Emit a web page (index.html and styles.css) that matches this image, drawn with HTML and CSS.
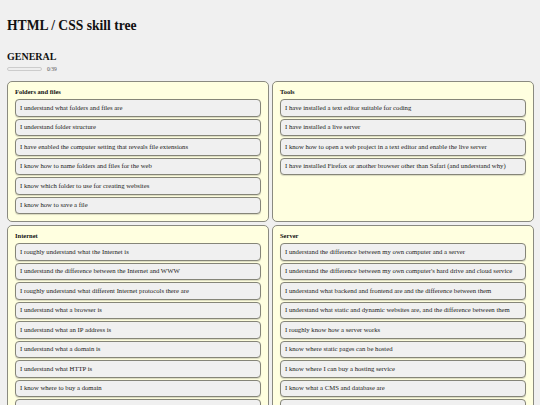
FILE: index.html
```html
<!DOCTYPE html>
<html lang="en">
<head>
    <meta charset="UTF-8">
    <meta name="viewport" content="width=device-width, initial-scale=1.0">
    <title>HTML / CSS skill tree</title>
    <link rel="stylesheet" href="styles.css">
</head>
<body>
    <h1>HTML / CSS skill tree</h1>

    <!-- General category -->
    <section class="category">
        <h2>GENERAL</h2>
        <div class="progress">
            <div class="bar"><span style="width:0%"></span></div>
            <span class="count">0/39</span>
        </div>

        <div class="groups">
            <div class="group">
                <h3>Folders and files</h3>
                <ul class="skills">
                    <li>I understand what folders and files are</li>
                    <li>I understand folder structure</li>
                    <li>I have enabled the computer setting that reveals file extensions</li>
                    <li>I know how to name folders and files for the web</li>
                    <li>I know which folder to use for creating websites</li>
                    <li>I know how to save a file</li>
                </ul>
            </div>
            <div class="group">
                <h3>Tools</h3>
                <ul class="skills">
                    <li>I have installed a text editor suitable for coding</li>
                    <li>I have installed a live server</li>
                    <li>I know how to open a web project in a text editor and enable the live server</li>
                    <li>I have installed Firefox or another browser other than Safari (and understand why)</li>
                </ul>
            </div>
            <div class="group">
                <h3>Internet</h3>
                <ul class="skills">
                    <li>I roughly understand what the Internet is</li>
                    <li>I understand the difference between the Internet and WWW</li>
                    <li>I roughly understand what different Internet protocols there are</li>
                    <li>I understand what a browser is</li>
                    <li>I understand what an IP address is</li>
                    <li>I understand what a domain is</li>
                    <li>I understand what HTTP is</li>
                    <li>I know where to buy a domain</li>
                    <li>I understand what DNS is</li>
                </ul>
            </div>
            <div class="group">
                <h3>Server</h3>
                <ul class="skills">
                    <li>I understand the difference between my own computer and a server</li>
                    <li>I understand the difference between my own computer's hard drive and cloud service</li>
                    <li>I understand what backend and frontend are and the difference between them</li>
                    <li>I understand what static and dynamic websites are, and the difference between them</li>
                    <li>I roughly know how a server works</li>
                    <li>I know where static pages can be hosted</li>
                    <li>I know where I can buy a hosting service</li>
                    <li>I know what a CMS and database are</li>
                    <li>I know how to upload files to a server</li>
                </ul>
            </div>
        </div>
    </section>
</body>
</html>
```

FILE: styles.css
```css
body {
    font-family: "Liberation Serif", "Times New Roman", serif;
    background-color: #f0f0f0;
    color: #222;
    margin: 0;
    padding: 0 6px 0 7px;
}
h1 {
    font-size: 13.6px;
    margin: 17px 0 0;
    line-height: 17px;
    color: #111;
}
.category h2 {
    font-size: 10px;
    margin: 17px 0 0;
    line-height: 12px;
    color: #111;
}
.progress {
    display: flex;
    align-items: center;
    gap: 5px;
    margin-top: 3px;
}
.progress .bar {
    width: 33px;
    height: 2px;
    border: 1px solid #ccc;
    border-radius: 3px;
    background-color: #eee;
}
.progress .bar span {
    display: block;
    height: 100%;
    background-color: #2ea44f;
}
.progress .count {
    font-size: 5.5px;
    color: #555;
}
.groups {
    display: grid;
    grid-template-columns: 1fr 1fr;
    gap: 3px;
    margin-top: 9px;
}
.group {
    background-color: #ffffe0;
    border: 1px solid #8a8a80;
    border-radius: 5px;
    padding: 6px 7px 7px;
}
.group h3 {
    font-size: 6.5px;
    margin: 0 0 3px;
    line-height: 8px;
    color: #111;
}
.skills {
    list-style: none;
    margin: 0;
    padding: 0;
    display: flex;
    flex-direction: column;
    gap: 2px;
}
.skills li {
    font-size: 6.7px;
    line-height: 8.5px;
    padding: 3.5px 4px;
    background-color: #f0f0f0;
    border: 1px solid #858578;
    border-radius: 4px;
    box-shadow: 0 1px 1px rgba(0, 0, 0, 0.15);
    color: #222;
}
```
